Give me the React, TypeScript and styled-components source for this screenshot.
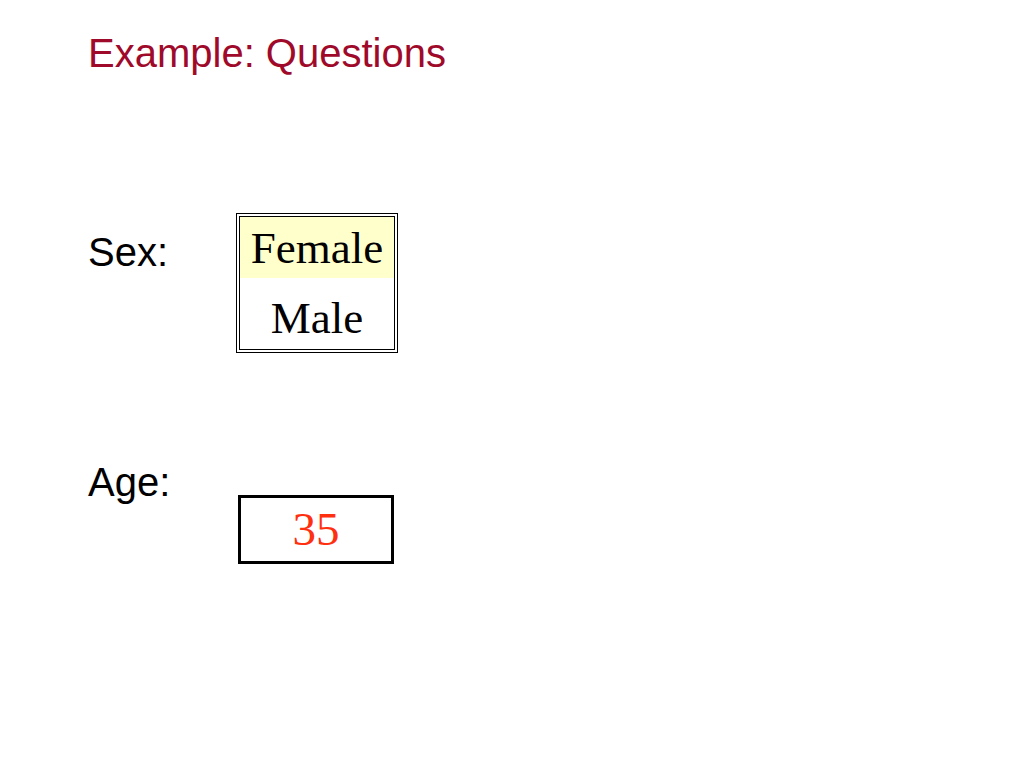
import React from "react";
import styled, { createGlobalStyle } from "styled-components";

const GlobalStyle = createGlobalStyle`
  html, body {
    margin: 0;
    padding: 0;
    background: #ffffff;
  }
`;

const Page = styled.div`
  width: 1024px;
  height: 768px;
  box-sizing: border-box;
  padding: 33px 0 0 88px;
  display: flex;
  flex-direction: column;
  font-family: "Liberation Sans", Arial, sans-serif;
`;

const Title = styled.h1`
  margin: 0;
  font-size: 40px;
  line-height: 40px;
  font-weight: normal;
  color: #a00a2a;
`;

const Row = styled.div<{ $gap: number }>`
  display: flex;
  align-items: flex-start;
  margin-top: ${(p) => p.$gap}px;
`;

const Label = styled.div<{ $top: number }>`
  width: 148px;
  margin-top: ${(p) => p.$top}px;
  font-size: 40px;
  line-height: 40px;
  color: #000;
`;

const SelectFrame = styled.div`
  border: 1px solid #000;
  padding: 2px;
`;

const SelectList = styled.div`
  width: 154px;
  border: 1px solid #000;
  display: flex;
  flex-direction: column;
`;

const Option = styled.div<{ $selected?: boolean; $height: number; $pad: number }>`
  height: ${(p) => p.$height}px;
  box-sizing: border-box;
  padding-top: ${(p) => p.$pad}px;
  line-height: ${(p) => p.$height - p.$pad}px;
  text-align: center;
  font-family: "Liberation Serif", "Times New Roman", serif;
  font-size: 45px;
  color: #000;
  background: ${(p) => (p.$selected ? "#ffffcc" : "#ffffff")};
`;

const InputBox = styled.div`
  margin-top: 33px;
  margin-left: 2px;
  width: 156px;
  height: 69px;
  box-sizing: border-box;
  border: 3px solid #000;
  text-align: center;
  font-family: "Liberation Serif", "Times New Roman", serif;
  font-size: 47px;
  line-height: 63px;
  color: #ff3010;
`;

export default function App() {
  return (
    <>
      <GlobalStyle />
      <Page>
        <Title>Example: Questions</Title>
        <Row $gap={140}>
          <Label $top={19}>Sex:</Label>
          <SelectFrame>
            <SelectList>
              <Option $selected $height={61} $pad={2}>
                Female
              </Option>
              <Option $height={71} $pad={10}>
                Male
              </Option>
            </SelectList>
          </SelectFrame>
        </Row>
        <Row $gap={109}>
          <Label $top={0}>Age:</Label>
          <InputBox>35</InputBox>
        </Row>
      </Page>
    </>
  );
}
